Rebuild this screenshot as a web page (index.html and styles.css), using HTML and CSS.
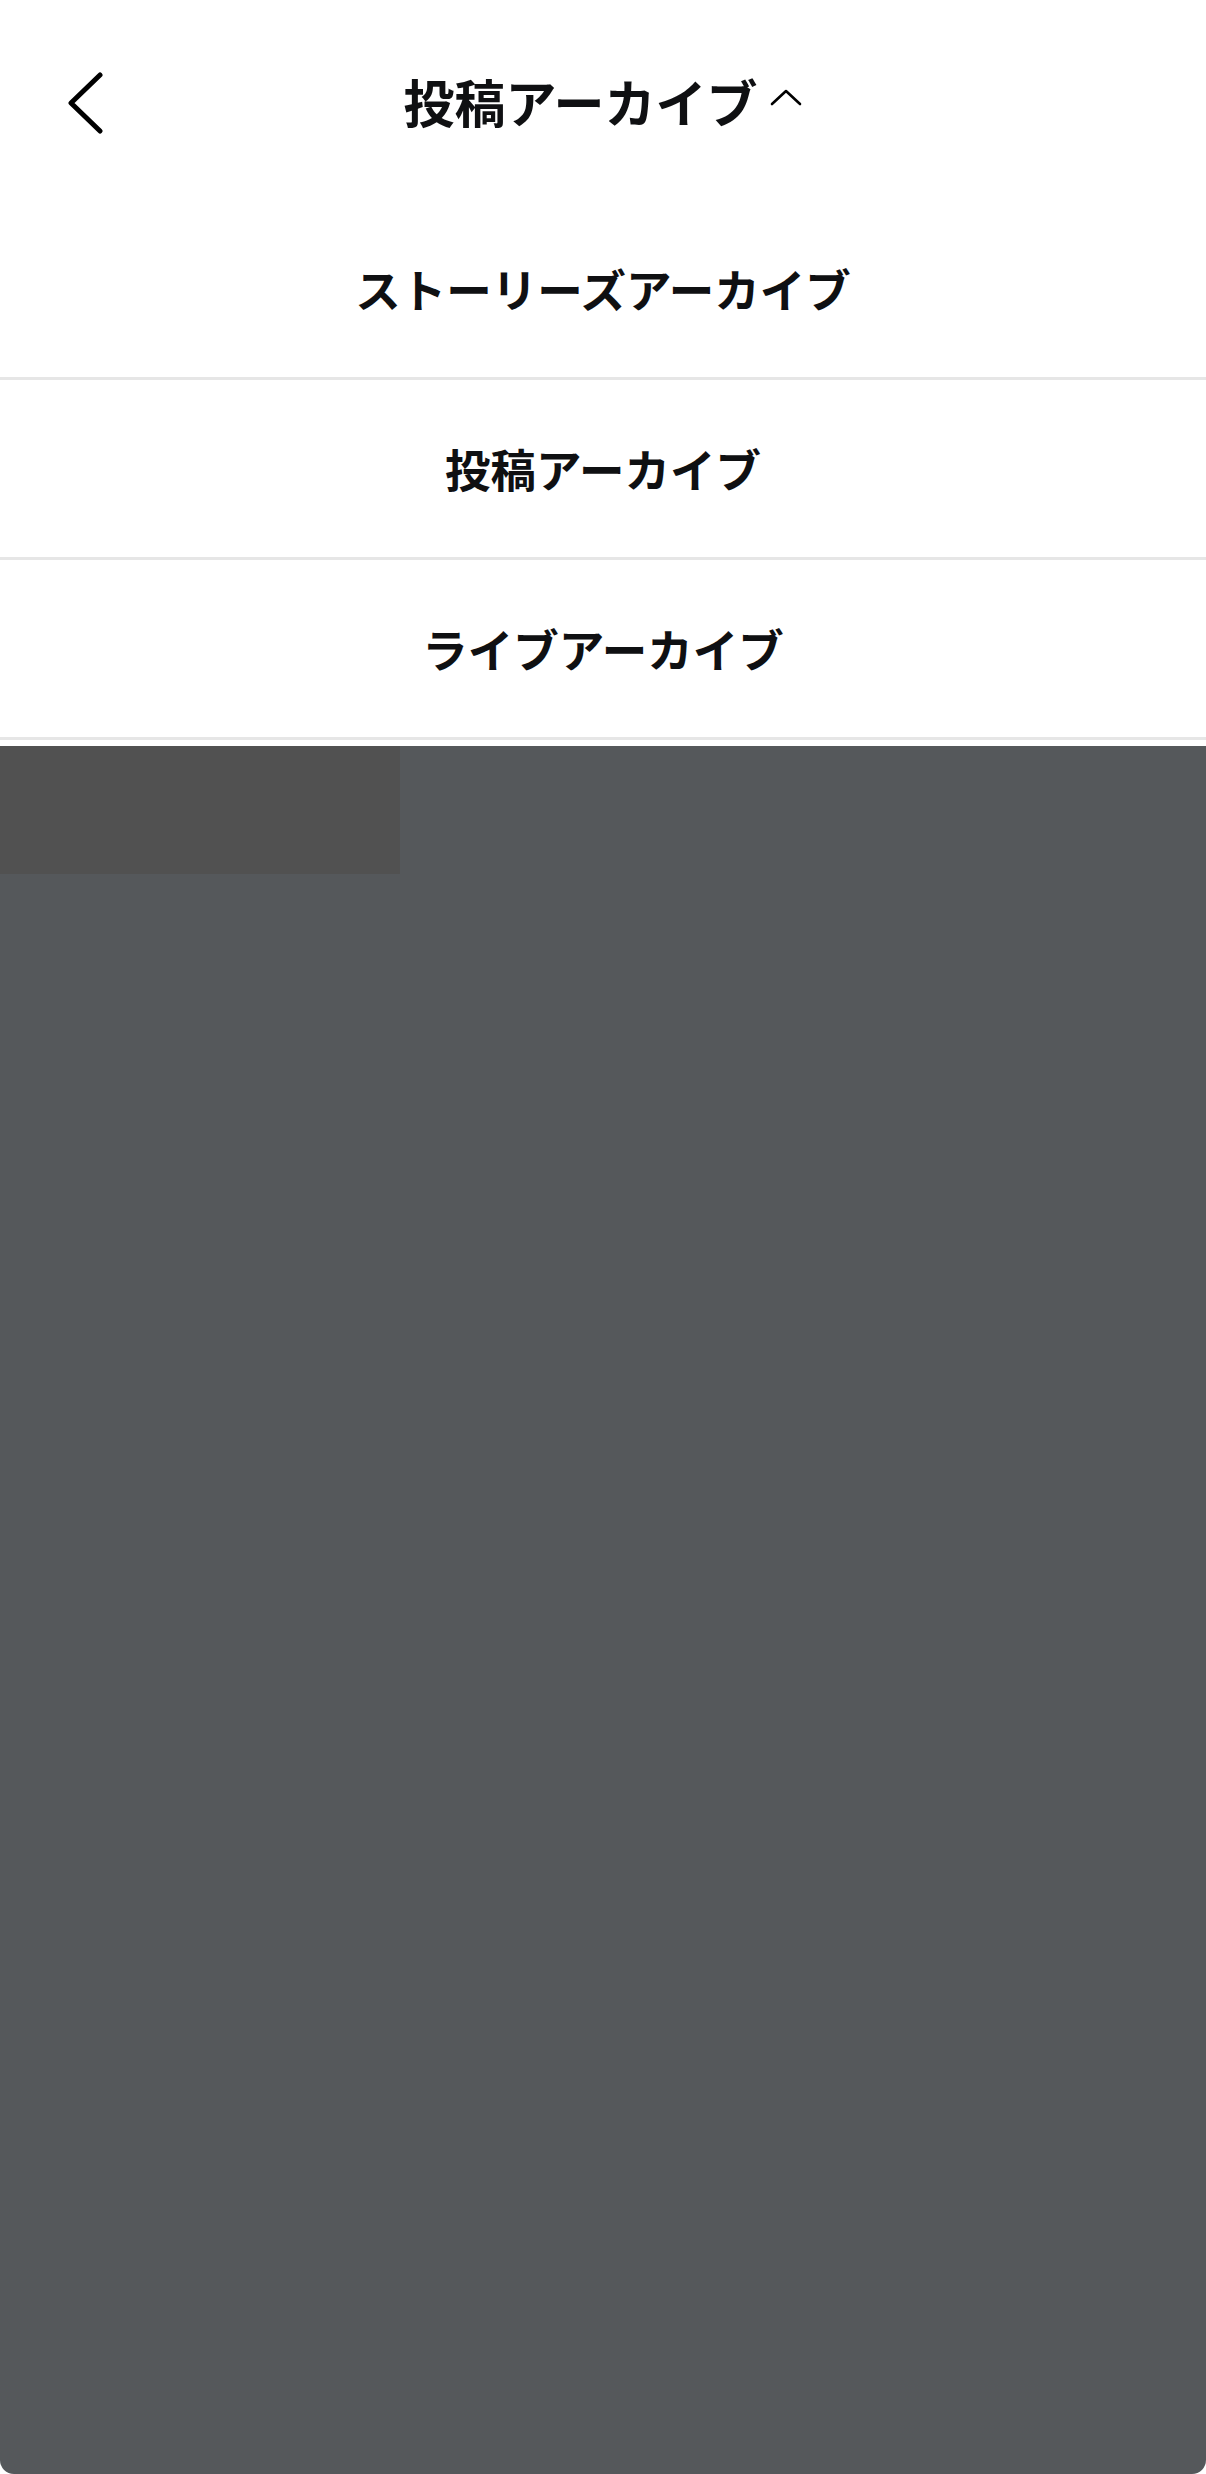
FILE: index.html
```html
<!DOCTYPE html>
<html lang="ja">
<head>
<meta charset="utf-8">
<title>投稿アーカイブ</title>
<link rel="stylesheet" href="styles.css">
</head>
<body>
<div class="screen">
  <header class="header">
    <button class="back" aria-label="戻る">
      <svg width="40" height="64" viewBox="0 0 40 64"><path d="M32 4 L3 32 L32 60" fill="none" stroke="#000" stroke-width="5" stroke-linecap="round" stroke-linejoin="round"/></svg>
    </button>
    <div class="title">
      <span class="title-text">投稿アーカイブ</span>
      <svg class="caret" width="32" height="18" viewBox="0 0 32 18"><path d="M2 15 L16 2 L30 15" fill="none" stroke="#000" stroke-width="2.6" stroke-linecap="round" stroke-linejoin="round"/></svg>
    </div>
  </header>
  <nav class="menu">
    <div class="menu-item">ストーリーズアーカイブ</div>
    <div class="menu-item">投稿アーカイブ</div>
    <div class="menu-item">ライブアーカイブ</div>
  </nav>
  <main class="panel">
    <div class="thumb"></div>
  </main>
</div>
</body>
</html>
```
FILE: styles.css
```css
* { box-sizing: border-box; }
html, body {
  margin: 0;
  padding: 0;
  background: #ffffff;
}
body {
  font-family: "Noto Sans CJK JP", "Noto Sans", sans-serif;
  color: #0f1012;
}
.screen {
  width: 1206px;
  height: 2474px;
  display: flex;
  flex-direction: column;
}
.header {
  height: 200px;
  display: flex;
  align-items: center;
  justify-content: center;
  position: relative;
}
.back {
  position: absolute;
  left: 68px;
  top: 71px;
  width: 40px;
  height: 64px;
  padding: 0;
  border: 0;
  background: none;
  display: flex;
}
.title {
  display: flex;
  align-items: center;
  gap: 13px;
  margin-top: 2px;
}
.title-text {
  font-size: 51px;
  font-weight: 700;
  line-height: 1;
}
.caret {
  margin-top: -6px;
}
.menu {
  display: flex;
  flex-direction: column;
}
.menu-item {
  height: 180px;
  border-bottom: 3px solid #e6e6e6;
  display: flex;
  align-items: center;
  justify-content: center;
  font-size: 45.5px;
  font-weight: 700;
  line-height: 1;
  padding-top: 0;
}
.panel {
  margin-top: 6px;
  flex: 1;
  background: #55585b;
  border-radius: 0 0 14px 14px;
}
.thumb {
  width: 400px;
  height: 128px;
  background: #515151;
}
```
